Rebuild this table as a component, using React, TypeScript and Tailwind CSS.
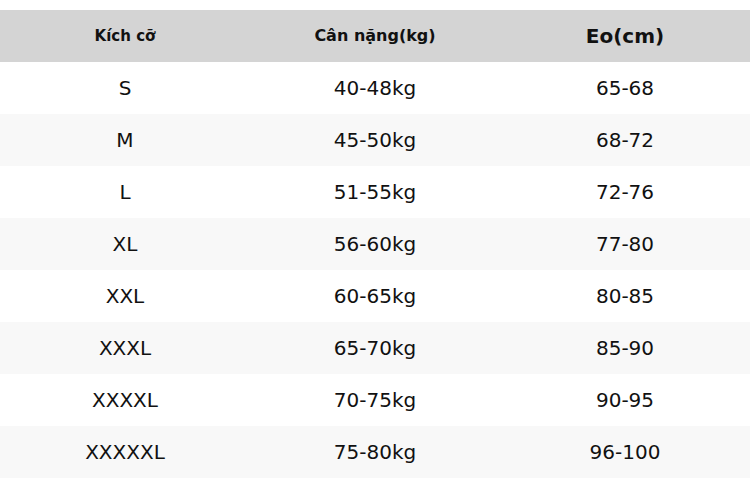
const rows = [
  ["S", "40-48kg", "65-68"],
  ["M", "45-50kg", "68-72"],
  ["L", "51-55kg", "72-76"],
  ["XL", "56-60kg", "77-80"],
  ["XXL", "60-65kg", "80-85"],
  ["XXXL", "65-70kg", "85-90"],
  ["XXXXL", "70-75kg", "90-95"],
  ["XXXXXL", "75-80kg", "96-100"],
];

export default function App() {
  return (
    <div className="w-[750px] h-[478px] bg-white pt-[10px] font-['DejaVu_Sans',sans-serif] text-[#111]">
      <div className="grid grid-cols-3 h-[52px] items-center bg-[#d4d4d4] font-bold text-center">
        <div className="text-[15px]">Kích cỡ</div>
        <div className="text-[16px]">Cân nặng(kg)</div>
        <div className="text-[20px]">Eo(cm)</div>
      </div>
      {rows.map((r, i) => (
        <div
          key={r[0]}
          className={`grid grid-cols-3 h-[52px] items-center text-center text-[20px] ${
            i % 2 === 1 ? "bg-[#f8f8f8]" : "bg-white"
          }`}
        >
          {r.map((c, j) => (
            <div key={j}>{c}</div>
          ))}
        </div>
      ))}
    </div>
  );
}
